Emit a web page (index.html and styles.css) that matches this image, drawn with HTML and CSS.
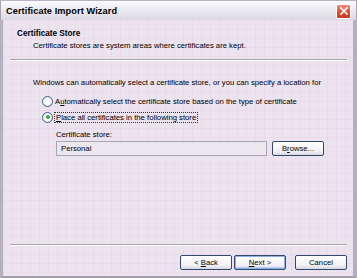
FILE: index.html
```html
<!DOCTYPE html>
<html lang="en">
<head>
    <meta charset="UTF-8" />
    <title>Certificate Import Wizard</title>
    <link rel="stylesheet" href="styles.css">
</head>
<body>
    <div class="window">
        <div class="titlebar">
            <span class="title">Certificate Import Wizard</span>
            <span class="close">
                <svg width="12" height="12" viewBox="0 0 12 12">
                    <path d="M3 3 L9 9 M9 3 L3 9" stroke="#fff" stroke-width="1.6" stroke-linecap="square" />
                </svg>
            </span>
        </div>

        <div class="client">
            <div class="header">
                <div class="heading">Certificate Store</div>
                <div class="subtitle">Certificate stores are system areas where certificates are kept.</div>
            </div>
            <div class="sep"></div>

            <div class="content">
                <p class="intro">Windows can automatically select a certificate store, or you can specify a location for</p>

                <label class="radio-row">
                    <span class="radio"></span>
                    <span>A<u>u</u>tomatically select the certificate store based on the type of certificate</span>
                </label>
                <label class="radio-row">
                    <span class="radio checked"></span>
                    <span class="focus"><u>P</u>lace all certificates in the following store</span>
                </label>

                <div class="store">
                    <div class="store-label">Certificate store:</div>
                    <div class="store-row">
                        <div class="field">Personal</div>
                        <button class="btn browse">B<u>r</u>owse...</button>
                    </div>
                </div>
            </div>

            <div class="sep bottom-sep"></div>
            <div class="footer">
                <button class="btn">&lt; <u>B</u>ack</button>
                <button class="btn default"><u>N</u>ext &gt;</button>
                <button class="btn cancel">Cancel</button>
            </div>
        </div>
    </div>
</body>
</html>
```

FILE: styles.css
```css
body {
    margin: 0;
    font-family: "Liberation Sans", Arial, sans-serif;
    font-size: 7.7px;
    color: #000;
    background: #d8d4e0;
}

.window {
    width: 357px;
    height: 278px;
    display: flex;
    flex-direction: column;
    box-sizing: border-box;
    overflow: hidden;
}

.titlebar {
    height: 20px;
    flex: 0 0 auto;
    display: flex;
    justify-content: space-between;
    align-items: center;
    padding: 0 5px 0 5px;
    background: linear-gradient(#fbfaff 0%, #eeecf4 40%, #dcd8e4 100%);
    border-top: 1px solid #b8b4c4;
    border-left: 1px solid #a8a4b4;
    border-right: 1px solid #a8a4b4;
    box-sizing: border-box;
}

.title {
    font-weight: bold;
    font-size: 9.2px;
    letter-spacing: 0.1px;
    padding-top: 1px;
}

.close {
    width: 13px;
    height: 13px;
    border-radius: 2px;
    border: 1px solid #fff;
    background: linear-gradient(#ef8b78, #d84a33 60%, #c63a24);
    display: flex;
    align-items: center;
    justify-content: center;
    margin-top: 1px;
}

.client {
    flex: 1;
    display: flex;
    flex-direction: column;
    border-left: 3px solid #b4b0c0;
    border-right: 4px solid #b4b0c0;
    border-bottom: 2px solid #a09cac;
    background-color: #ebe4ef;
    background-image:
        linear-gradient(90deg, rgba(236, 196, 226, 0.3) 1px, transparent 1px),
        linear-gradient(rgba(236, 196, 226, 0.3) 1px, transparent 1px);
    background-size: 9px 9px;
}

.header {
    height: 39px;
    padding: 9px 0 0 14px;
    box-sizing: border-box;
}

.heading {
    font-weight: bold;
    font-size: 8.2px;
}

.subtitle {
    margin: 3px 0 0 16px;
}

.sep {
    height: 0;
    border-top: 1px solid #a8a4b0;
    border-bottom: 1px solid #fff;
    margin: 0 6px 0 7px;
}

.content {
    padding: 17px 0 0 30px;
}

.intro {
    margin: 0 0 6px 0;
}

.radio-row {
    display: flex;
    align-items: center;
    height: 16px;
    margin-left: 9px;
}

.radio {
    width: 9px;
    height: 9px;
    border-radius: 50%;
    border: 1px solid #3c6088;
    background: radial-gradient(#fff 40%, #dcdce6);
    margin-right: 2px;
    display: flex;
    align-items: center;
    justify-content: center;
}

.radio.checked::after {
    content: "";
    width: 4px;
    height: 4px;
    border-radius: 50%;
    background: #2fa52f;
}

.focus {
    outline: 1px dotted #333;
    outline-offset: 0;
    padding: 0 1px;
}

.store {
    margin: 5px 0 0 23px;
}

.store-label {
    margin-bottom: 2px;
}

.store-row {
    display: flex;
    align-items: center;
    gap: 5px;
}

.field {
    width: 211px;
    height: 15px;
    box-sizing: border-box;
    border: 1px solid #a6a6b0;
    background: #ece6ef;
    padding: 2px 4px;
}

.btn {
    font-family: inherit;
    font-size: 7.7px;
    height: 15px;
    padding: 0;
    box-sizing: border-box;
    border: 1px solid #334a6c;
    border-radius: 2px;
    background: linear-gradient(#ffffff, #f2f2f6 70%, #d6d6e2);
    color: #000;
}

.browse {
    width: 52px;
}

.bottom-sep {
    margin-top: auto;
}

.footer {
    display: flex;
    justify-content: flex-end;
    gap: 2px;
    padding: 9px 6px 6px 0;
}

.footer .btn {
    width: 52px;
}

.btn.default {
    box-shadow: inset 0 0 0 1px #8fb0e6, inset 0 -1px 0 1px #b6ccf0;
}

.btn.cancel {
    width: 52px;
    margin-left: 7px;
}
```
